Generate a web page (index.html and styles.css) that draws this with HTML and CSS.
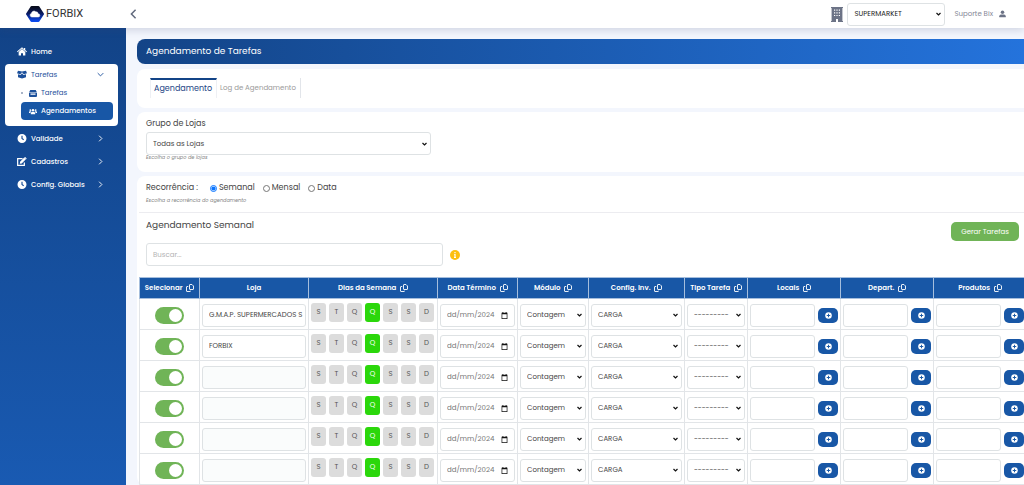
FILE: index.html
```html
<!DOCTYPE html>
<html lang="pt-BR">
<head>
<meta charset="utf-8">
<title>Agendamento de Tarefas</title>
<link rel="stylesheet" href="styles.css">
</head>
<body>
<svg class="sprite" aria-hidden="true">
  <symbol id="clock" viewBox="0 0 16 16"><path fill="currentColor" fill-rule="evenodd" d="M8 0a8 8 0 1 0 0 16A8 8 0 0 0 8 0zM7 3h2v4.500l2.600 2-1.200 1.500L7 8.500z"/></symbol>
  <symbol id="chevron" viewBox="0 0 10 10"><path d="M3 1l4 4-4 4" fill="none" stroke="currentColor" stroke-width="1.300"/></symbol>
  <symbol id="copy" viewBox="0 0 16 16"><path d="M8 1h4l3 3v6q0 1-1 1H8q-1 0-1-1V2q0-1 1-1zM4.500 5H2Q1 5 1 6v8q0 1 1 1h6q1 0 1-1v-.5" fill="none" stroke="currentColor" stroke-width="1.800" stroke-linejoin="round"/></symbol>
  <symbol id="plus" viewBox="0 0 16 16"><circle cx="8" cy="8" r="7.500" fill="#fff"/><path d="M8 4v8M4 8h8" stroke="#1857a6" stroke-width="2.200"/></symbol>
  <symbol id="calendar" viewBox="0 0 12 12"><path fill="currentColor" fill-rule="evenodd" d="M2.500 0h1.500v1.200h4V0h1.500v1.200H11V12H1V1.200h1.500zM2.200 4v6.800h7.600V4z"/></symbol>
</svg>

<header class="topbar">
  <a class="brand" href="#">
    <svg class="brand-mark" viewBox="0 0 18 16" aria-hidden="true">
      <defs><linearGradient id="mark" x1="0" y1="0" x2="0" y2="1"><stop offset="0" stop-color="#080c1c"/><stop offset=".45" stop-color="#0a1a60"/><stop offset="1" stop-color="#0b49ee"/></linearGradient></defs>
      <path d="M5.500 1h7L17 8l-4.500 7h-7L1 8z" fill="url(#mark)" stroke="url(#mark)" stroke-width="2" stroke-linejoin="round"/>
      <path d="M5.800 11a1.900 1.900 0 0 1-.3-3.700 2.500 2.500 0 0 1 4.200-1.500 2.100 2.100 0 0 1 2.400 2 1.600 1.600 0 0 1 .2 3.200z" fill="#fff" stroke="#fff" stroke-width=".5"/>
    </svg>
    <span>FORBIX</span>
  </a>
  <button class="collapse" type="button" aria-label="Recolher menu"><svg viewBox="0 0 8 12"><path d="M6.500 1L1.500 6l5 5" fill="none" stroke="currentColor" stroke-width="1.800"/></svg></button>
  <div class="account">
    <svg class="building" viewBox="0 0 12 15" aria-hidden="true"><path fill="currentColor" fill-rule="evenodd" d="M0 0h12v1h-.6v13h.6v1H7v-3H5v3H0v-1h.6V1H0zM3 2.500v1.200h1.200V2.500zm2.400 0v1.200h1.200V2.500zm2.400 0v1.200h1.200V2.500zM3 5.200v1.200h1.200V5.200zm2.400 0v1.200h1.200V5.200zm2.400 0v1.200h1.200V5.200zM3 7.900v1.200h1.200V7.900zm2.400 0v1.200h1.200V7.900zm2.400 0v1.200h1.200V7.900z"/></svg>
    <select class="field company" aria-label="Empresa"><option>SUPERMARKET</option></select>
    <a class="user" href="#">Suporte Bix <svg viewBox="0 0 8 8" aria-hidden="true"><circle cx="4" cy="2" r="2" fill="currentColor"/><path d="M.3 7.800V6.500Q.3 4.600 2.300 4.600h3.400q2 0 2 1.900v1.300z" fill="currentColor"/></svg></a>
  </div>
</header>

<div class="shell">
  <nav class="sidebar">
    <a class="nav-item" href="#">
      <svg class="nav-icon" viewBox="0 0 18 16"><path fill="currentColor" d="M9 3.600l6 5.200V15h-4.200v-4H7.200v4H3V8.800zM9 .4l3.600 3.100V1.500h2.200v3.900L18 8.200l-1 1.200-8-7-8 7L0 8.200z"/></svg>
      <span>Home</span>
    </a>
    <div class="nav-group">
      <a class="nav-item" href="#">
        <svg class="nav-icon" viewBox="0 0 20 16"><path fill="currentColor" d="M2 .5l8 1.500 8-1.500 2 5L13.500 7.500 10 3.500 6.500 7.500 0 5.500zM2 7.300l5.200 1.500L10 5.700l2.800 3.100L18 7.300V13.500L10 16 2 13.500z"/></svg>
        <span>Tarefas</span>
        <svg class="caret down" viewBox="0 0 10 10"><use href="#chevron"/></svg>
      </a>
      <a class="nav-sub dotted" href="#">
        <svg class="sub-icon" viewBox="0 0 16 14"><path fill="currentColor" fill-rule="evenodd" d="M2.500 0h11L16 5H0zM0 6h16v6q0 2-2 2H2q-2 0-2-2zM3 7v2.500h10V7z"/></svg>
        <span>Tarefas</span>
      </a>
      <a class="nav-sub current" href="#" aria-current="page">
        <svg class="sub-icon" viewBox="0 0 20 14"><g fill="currentColor"><circle cx="10" cy="3.800" r="3.200"/><circle cx="3.300" cy="3.500" r="2.200"/><circle cx="16.700" cy="3.500" r="2.200"/><path d="M4.500 14v-2.500Q4.500 8 8 8h4q3.500 0 3.500 3.500V14zM0 11V8.300q0-2 2-2h3l1 1Q4 8 3.500 11zM20 11V8.300q0-2-2-2h-3l-1 1q2 .7 2.500 3.700z"/></g></svg>
        <span>Agendamentos</span>
      </a>
    </div>
    <a class="nav-item" href="#"><svg class="nav-icon"><use href="#clock"/></svg><span>Validade</span><svg class="caret"><use href="#chevron"/></svg></a>
    <a class="nav-item" href="#">
      <svg class="nav-icon" viewBox="0 0 18 16"><path d="M10 3H1.200v11.800h12V10" fill="none" stroke="currentColor" stroke-width="2.200"/><path fill="currentColor" d="M5.500 8.500L13 1l3 3-7.500 7.500-3.500.5zM13.800.3q.7-.6 1.400 0l1.800 1.700q.6.700 0 1.400l-.6.500-3-3z"/></svg>
      <span>Cadastros</span><svg class="caret"><use href="#chevron"/></svg>
    </a>
    <a class="nav-item" href="#"><svg class="nav-icon"><use href="#clock"/></svg><span>Config. Globais</span><svg class="caret"><use href="#chevron"/></svg></a>
  </nav>

  <main class="content">
    <h1 class="page-title">Agendamento de Tarefas</h1>

    <section class="card tabs-card">
      <div class="tabs" role="tablist">
        <button class="tab active" type="button" role="tab" aria-selected="true">Agendamento</button>
        <button class="tab" type="button" role="tab" aria-selected="false">Log de Agendamento</button>
      </div>
    </section>

    <section class="card group-card">
      <label class="label" for="grupo">Grupo de Lojas</label>
      <select class="field group-select" id="grupo"><option>Todas as Lojas</option></select>
      <small class="hint">Escolha o grupo de lojas</small>
    </section>

    <section class="card schedule-card">
      <div class="recurrence" role="radiogroup" aria-labelledby="rec">
        <span id="rec">Recorrência :</span>
        <label><input type="radio" name="rec" checked>Semanal</label>
        <label><input type="radio" name="rec">Mensal</label>
        <label><input type="radio" name="rec">Data</label>
      </div>
      <small class="hint">Escolha a recorrência do agendamento</small>
      <div class="schedule-head">
        <h2>Agendamento Semanal</h2>
        <button class="generate" type="button">Gerar Tarefas</button>
      </div>
      <div class="search">
        <input class="field" type="text" placeholder="Buscar..." aria-label="Buscar">
        <svg class="info" viewBox="0 0 10 10" role="img" aria-label="Informação"><circle cx="5" cy="5" r="5" fill="#fdbf0f"/><path d="M5 2v1.300M4.200 4.500H5v3M4 7.500h2" fill="none" stroke="#fff" stroke-width="1.200"/></svg>
      </div>
      <table class="grid">
        <colgroup><col class="c-sel"><col class="c-store"><col class="c-days"><col class="c-date"><col class="c-mod"><col class="c-conf"><col class="c-type"><col class="c-pick"><col class="c-pick"><col class="c-pick"></colgroup>
        <thead>
          <tr>
            <th>Selecionar <svg><use href="#copy"/></svg></th>
            <th>Loja</th>
            <th>Dias da Semana <svg><use href="#copy"/></svg></th>
            <th>Data Término <svg><use href="#copy"/></svg></th>
            <th>Módulo <svg><use href="#copy"/></svg></th>
            <th>Config. Inv. <svg><use href="#copy"/></svg></th>
            <th>Tipo Tarefa <svg><use href="#copy"/></svg></th>
            <th>Locais <svg><use href="#copy"/></svg></th>
            <th>Depart. <svg><use href="#copy"/></svg></th>
            <th>Produtos <svg><use href="#copy"/></svg></th>
          </tr>
        </thead>
        <tbody id="rows"></tbody>
      </table>
    </section>
  </main>
</div>
<script src="app.js"></script>
</body>
</html>
```
FILE: styles.css
```css
* { box-sizing: border-box; }

body {
  margin: 0;
  height: 100vh;
  display: flex;
  flex-direction: column;
  overflow: hidden;
  background: #f3f6fd;
  color: #444;
  font: 8px/12px Poppins, Inter, "Open Sans", sans-serif;
}

button, input, select { font: inherit; color: inherit; }
button { cursor: pointer; }
a { color: inherit; text-decoration: none; }
svg { flex: none; }
.sprite { display: none; }

.field {
  width: 100%;
  height: 23px;
  padding: 0 6px;
  border: 1px solid #dee2e4;
  border-radius: 3px;
  background: #fff;
  font-size: 7px;
}
select.field {
  appearance: none;
  padding-right: 10px;
  background: #fff url("data:image/svg+xml,%3Csvg xmlns='http://www.w3.org/2000/svg' viewBox='0 0 10 8'%3E%3Cpath d='M1 2l4 4 4-4' fill='none' stroke='%23111' stroke-width='2.4'/%3E%3C/svg%3E") no-repeat right 3px center / 5px 4px;
}

/* Top bar */
.topbar {
  position: relative;
  z-index: 1;
  flex: none;
  display: flex;
  align-items: center;
  height: 28px;
  padding-right: 18px;
  background: #fff;
  box-shadow: 0 2px 8px rgba(60, 70, 110, .2);
}
.brand {
  display: flex;
  align-items: center;
  gap: 2px;
  width: 126px;
  padding-left: 26px;
  font: 11px/16px Roboto, sans-serif;
  color: #333;
}
.brand-mark { width: 18px; height: 16px; }
.collapse {
  display: flex;
  padding: 0 4px;
  border: 0;
  background: none;
  color: #626a7e;
}
.collapse svg { width: 7px; height: 10px; }
.account {
  display: flex;
  align-items: center;
  gap: 4px;
  margin-left: auto;
}
.building { width: 12px; height: 15px; color: #6c7386; }
.company { width: 98px; color: #222; }
.user {
  display: flex;
  align-items: center;
  gap: 6px;
  padding-left: 5px;
  color: #858796;
  font-size: 7px;
}
.user svg { width: 7px; height: 8px; color: #6c7386; }

/* Sidebar */
.shell { display: flex; flex: 1; min-height: 0; }
.sidebar {
  flex: none;
  display: flex;
  flex-direction: column;
  width: 126px;
  padding: 16px 5px 0;
  background: linear-gradient(#124387, #195ab2);
  color: #fff;
  font-size: 7px;
  font-weight: 500;
}
.nav-item {
  display: flex;
  align-items: center;
  gap: 4px;
  height: 23px;
  padding: 0 17px 0 12px;
  line-height: 15px;
}
.sidebar > .nav-item:first-child { height: 15px; margin-bottom: 5px; }
.nav-icon { width: 10px; height: 9px; }
.caret { width: 7px; height: 7px; margin-left: auto; }
.caret.down { transform: rotate(90deg); }
.nav-group {
  display: flex;
  flex-direction: column;
  margin-right: 3px;
  margin-bottom: 1px;
  padding-bottom: 6px;
  border-radius: 4px;
  background: #fff;
  color: #1c509b;
}
.nav-group .nav-item { height: 20px; padding-right: 14px; font-weight: 400; }
.nav-sub {
  display: flex;
  align-items: center;
  gap: 4px;
  height: 18px;
  margin: 0 5px 0 16px;
  padding-left: 8px;
  font-weight: 400;
}
.nav-sub.dotted { padding-left: 0; }
.dotted::before {
  content: "";
  width: 2px;
  height: 2px;
  margin-right: 2px;
  border-radius: 50%;
  background: #8c9bb5;
}
.nav-sub.current {
  border-radius: 4px;
  background: #1857a6;
  color: #fff;
  font-weight: 500;
}
.sub-icon { width: 8px; height: 7px; }

/* Content */
.content {
  flex: 1;
  min-width: 0;
  display: flex;
  flex-direction: column;
  gap: 4px;
  padding: 11px 0 0 11px;
  overflow: hidden;
}
.page-title {
  flex: none;
  margin: 0 0 1px;
  padding: 0 9px;
  border-radius: 8px 0 0 8px;
  background: linear-gradient(90deg, #134487, #2473dc);
  color: #fff;
  font-size: 9px;
  font-weight: 400;
  line-height: 25px;
}
.card {
  flex: none;
  border-radius: 8px 0 0 8px;
  background: #fff;
}
.tabs-card { padding: 9px 13px 10px; }
.tabs { display: flex; }
.tab {
  height: 20px;
  padding: 0 4px 0 3px;
  border: 0;
  border-right: 1px solid #e2e5ea;
  background: none;
  color: #999;
  font-size: 7px;
}
.tab.active {
  border-top: 2px solid #134487;
  border-left: 1px solid #eef0f4;
  border-right-color: #eef0f4;
  color: #1c4484;
  font-size: 8px;
}
.label, .group-select, .hint { display: block; }
.group-card { padding: 6px 9px 12px; }
.label { margin-bottom: 2px; }
.group-select { width: 285px; max-width: 100%; }
.hint {
  color: #858585;
  font-size: 5px;
  font-style: italic;
  line-height: 6px;
}
.group-card .hint { line-height: 5px; }

.schedule-card { padding: 6px 0 0 2px; }
.recurrence {
  display: flex;
  align-items: center;
  gap: 8px;
  padding-left: 7px;
}
.recurrence span { margin-right: 4px; }
.recurrence label { display: flex; align-items: center; gap: 2px; }
.recurrence input { width: 7px; height: 7px; margin: 0; accent-color: #0a75ff; }
.schedule-card .hint { margin-top: 4px; padding-left: 7px; }
.schedule-head {
  display: flex;
  justify-content: space-between;
  margin-top: 8px;
  padding: 6px 5px 0 7px;
  border-top: 1px solid #ececf0;
}
.schedule-head h2 { margin: 0; font-size: 9px; font-weight: 400; line-height: 12px; }
.generate {
  height: 19px;
  margin-top: 3px;
  padding: 0 10px;
  border: 0;
  border-radius: 5px;
  background: #70b457;
  color: #fff;
  font-size: 7px;
}
.search {
  display: flex;
  align-items: center;
  gap: 7px;
  padding: 2px 7px 11px;
}
.search .field { width: 297px; }
.search .field::placeholder { color: #b3b3b3; }
.info { width: 10px; height: 10px; }

/* Schedule table */
.grid {
  width: 887px;
  min-width: 100%;
  table-layout: fixed;
  border-collapse: collapse;
  font-size: 7px;
}
.c-sel { width: 60px; }
.c-store { width: 109px; }
.c-days { width: 129px; }
.c-date { width: 80px; }
.c-mod { width: 71px; }
.c-conf { width: 96px; }
.c-type { width: 63px; }
.c-pick { width: 93px; }
.grid th {
  height: 21px;
  padding: 0;
  border: 1px solid #a5bedd;
  background: #1857a6;
  color: #fff;
  font-weight: 600;
  white-space: nowrap;
}
.grid th svg { width: 8px; height: 8px; margin-left: 2px; vertical-align: middle; }
.grid td {
  height: 31px;
  padding: 2px 2px 0;
  border: 1px solid #e2e5e8;
  text-align: center;
}
.grid .field { display: block; }
.grid .store { padding-right: 2px; }
.grid .store:read-only:placeholder-shown { background: #fafcfc; }
.toggle {
  appearance: none;
  display: inline-flex;
  align-items: center;
  width: 29px;
  height: 17px;
  margin: 0;
  padding: 0 2px;
  border-radius: 9px;
  background: #bbb;
  vertical-align: middle;
}
.toggle::before {
  content: "";
  width: 13px;
  height: 13px;
  border-radius: 50%;
  background: #fff;
}
.toggle:checked { justify-content: flex-end; background: #70b457; }
.days { display: flex; gap: 3px; margin-bottom: 6px; }
.day {
  width: 15px;
  height: 19px;
  padding: 0;
  border: 0;
  border-radius: 3px;
  background: #dcdcdc;
  color: #555;
  font-size: 7px;
}
.day.on { background: #2bd70b; color: #fff; }
.grid .date { display: flex; align-items: center; }
.date input {
  flex: 1;
  min-width: 0;
  padding: 0;
  border: 0;
  background: none;
  color: #757575;
}
.date button { display: flex; padding: 0; border: 0; background: none; color: #111; }
.date svg { width: 7px; height: 7px; }
.picker { display: flex; align-items: center; gap: 3px; }
.picker .field { flex: 1; min-width: 0; }
.add {
  display: flex;
  align-items: center;
  justify-content: center;
  width: 20px;
  height: 15px;
  padding: 0;
  border: 0;
  border-radius: 5px;
  background: #1857a6;
}
.add svg { width: 7px; height: 7px; }
```
FILE: app.js
```js
const stores = ["G.M.A.P. SUPERMERCADOS S", "FORBIX", "", "", "", ""];
const days = ["S", "T", "Q", "Q", "S", "S", "D"];
const activeDay = 3;

const select = (label, value) =>
  `<td><select class="field" aria-label="${label}"><option>${value}</option></select></td>`;

const picker = (label) =>
  `<td><div class="picker"><input class="field" type="text" aria-label="${label}">
  <button class="add" type="button" aria-label="Adicionar ${label}"><svg><use href="#plus"/></svg></button></div></td>`;

const row = (store) => `<tr>
  <td><input class="toggle" type="checkbox" checked aria-label="Selecionar"></td>
  <td><input class="field store" type="text" value="${store}" placeholder=" " readonly aria-label="Loja"></td>
  <td><div class="days">${days
    .map((d, i) => `<button type="button" class="day${i === activeDay ? " on" : ""}" aria-pressed="${i === activeDay}">${d}</button>`)
    .join("")}</div></td>
  <td><div class="field date"><input type="text" value="dd/mm/2024" aria-label="Data Término">
  <button type="button" aria-label="Abrir calendário"><svg><use href="#calendar"/></svg></button></div></td>
  ${select("Módulo", "Contagem")}${select("Config. Inv.", "CARGA")}${select("Tipo Tarefa", "---------")}
  ${picker("Locais")}${picker("Depart.")}${picker("Produtos")}
</tr>`;

document.getElementById("rows").innerHTML = stores.map(row).join("");
```
